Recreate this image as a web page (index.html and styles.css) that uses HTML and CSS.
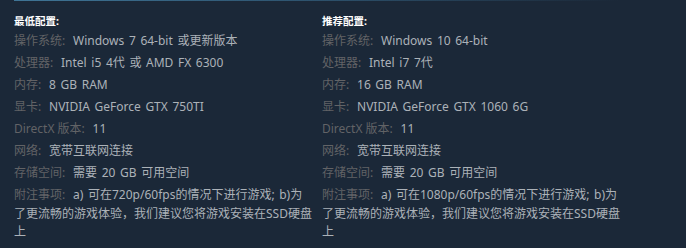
FILE: index.html
```html
<!DOCTYPE html>
<html lang="zh-CN">
<head>
<meta charset="utf-8">
<link rel="stylesheet" href="styles.css">
</head>
<body>
<div class="sysreq">
  <div class="topline"></div>
  <div class="cols">
    <div class="col">
      <div class="title">最低配置:</div>
      <ul class="list">
        <li><span class="lbl">操作系统:</span> Windows 7 64-bit 或更新版本</li>
        <li><span class="lbl">处理器:</span> Intel i5 4代 或 AMD FX 6300</li>
        <li><span class="lbl">内存:</span> 8 GB RAM</li>
        <li><span class="lbl">显卡:</span> NVIDIA GeForce GTX 750TI</li>
        <li><span class="lbl">DirectX 版本:</span> 11</li>
        <li><span class="lbl">网络:</span> 宽带互联网连接</li>
        <li><span class="lbl">存储空间:</span> 需要 20 GB 可用空间</li>
        <li><span class="lbl">附注事项:</span> a) 可在720p/60fps的情况下进行游戏; b)为了更流畅的游戏体验，我们建议您将游戏安装在SSD硬盘上</li>
      </ul>
    </div>
    <div class="col">
      <div class="title">推荐配置:</div>
      <ul class="list">
        <li><span class="lbl">操作系统:</span> Windows 10 64-bit</li>
        <li><span class="lbl">处理器:</span> Intel i7 7代</li>
        <li><span class="lbl">内存:</span> 16 GB RAM</li>
        <li><span class="lbl">显卡:</span> NVIDIA GeForce GTX 1060 6G</li>
        <li><span class="lbl">DirectX 版本:</span> 11</li>
        <li><span class="lbl">网络:</span> 宽带互联网连接</li>
        <li><span class="lbl">存储空间:</span> 需要 20 GB 可用空间</li>
        <li><span class="lbl">附注事项:</span> a) 可在1080p/60fps的情况下进行游戏; b)为了更流畅的游戏体验，我们建议您将游戏安装在SSD硬盘上</li>
      </ul>
    </div>
  </div>
</div>
</body>
</html>
```
FILE: styles.css
```css
html, body {
  margin: 0;
  padding: 0;
  background: #1b2838;
}
body {
  font-family: "Noto Sans", "Noto Sans CJK SC", sans-serif;
  font-size: 12px;
  color: #acb2b8;
  width: 686px;
  height: 248px;
  overflow: hidden;
}
.sysreq {
  padding-left: 14px;
}
.topline {
  height: 1px;
  background: linear-gradient(to right, #3f7596 0%, #2f5672 40%, rgba(27,40,56,0) 90%);
}
.cols {
  display: flex;
  gap: 9px;
  padding-top: 11px;
}
.col {
  width: 299px;
}
.title {
  font-size: 10.5px;
  font-weight: bold;
  color: #ffffff;
  line-height: 18px;
  margin-bottom: 2px;
}
.list {
  list-style: none;
  margin: 0;
  padding: 0;
}
.list li {
  line-height: 18.5px;
  margin-bottom: 3.5px;
  word-spacing: 1.5px;
}
.lbl {
  color: #626366;
  margin-right: 3.2px;
  word-spacing: 0;
}
```
